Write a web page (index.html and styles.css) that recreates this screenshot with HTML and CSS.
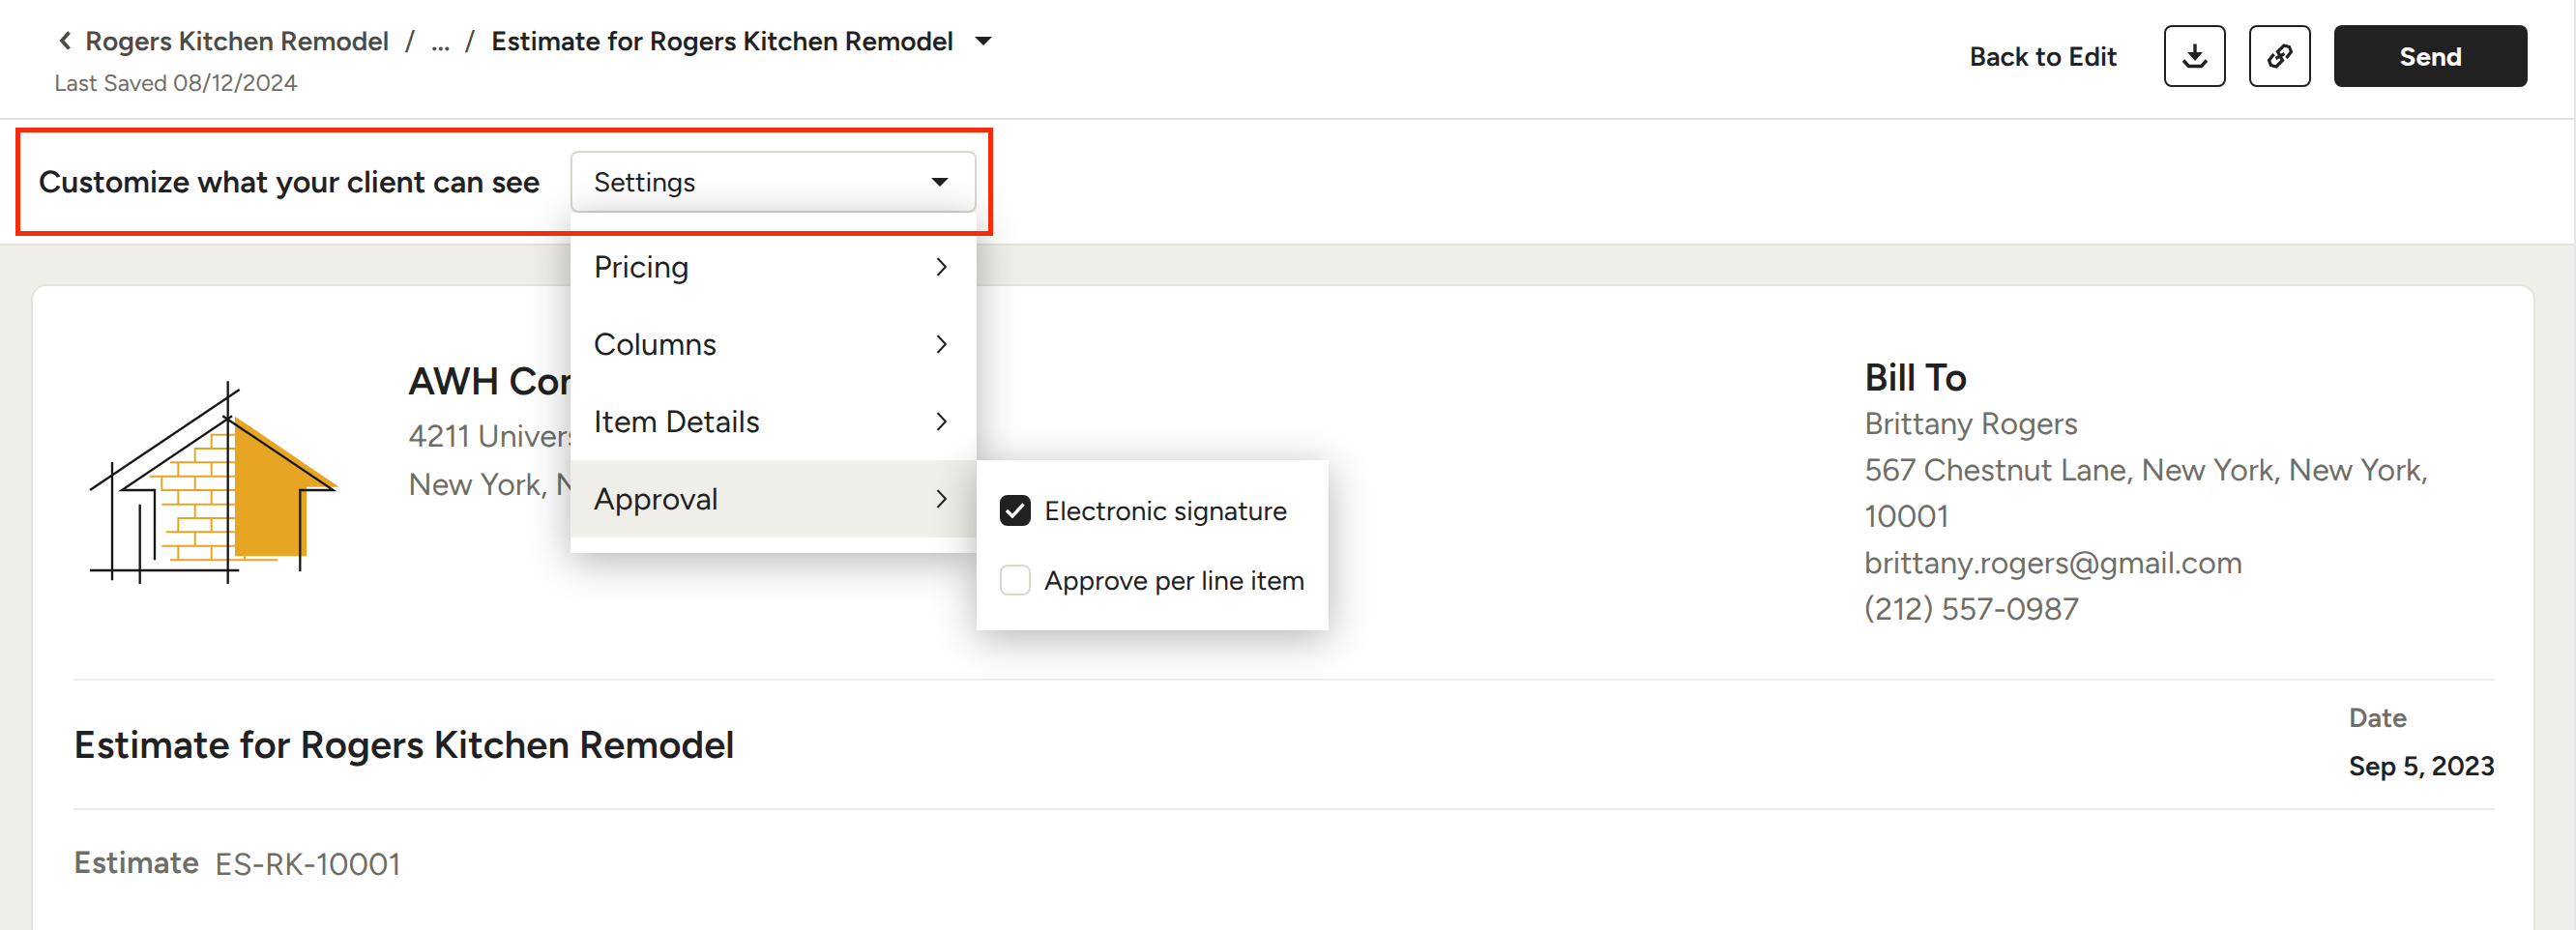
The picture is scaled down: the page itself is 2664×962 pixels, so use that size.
FILE: index.html
```html
<!DOCTYPE html>
<html lang="en">
<head>
    <meta charset="UTF-8">
    <meta name="viewport" content="width=device-width, initial-scale=1.0">
    <title>Estimate for Rogers Kitchen Remodel</title>
    <link rel="stylesheet" href="styles.css">
</head>
<body>
    <header class="topbar">
        <div class="topbar-left">
            <nav class="breadcrumb">
                <svg class="back-icon" width="12" height="20" viewBox="0 0 12 20"><path d="M10.500 1.500L3 10l7.500 8.500" fill="none" stroke="#4c4b45" stroke-width="3.800"/></svg>
                <a class="crumb crumb-project">Rogers Kitchen Remodel</a>
                <span class="slash">/</span>
                <span class="crumb dots">...</span>
                <span class="slash">/</span>
                <span class="crumb-current">Estimate for Rogers Kitchen Remodel</span>
                <svg class="caret" width="18" height="9" viewBox="0 0 18 9"><path d="M0 0h18l-9 9z" fill="#212121"/></svg>
            </nav>
            <p class="last-saved">Last Saved 08/12/2024</p>
        </div>
        <div class="topbar-actions">
            <a class="back-to-edit">Back to Edit</a>
            <button class="icon-btn">
                <svg width="28" height="28" viewBox="0 0 28 28"><path d="M12.300 1.500h3.400V10H22l-8 9-8-9h6.300z" fill="#212121"/><path d="M2 18.500l5.500 6h13l5.500-6" fill="none" stroke="#212121" stroke-width="3.400"/></svg>
            </button>
            <button class="icon-btn">
                <svg width="26" height="28" viewBox="0 0 26 28"><path d="M19.500 16L24.500 9.500L22.500 4.500L17 3L10.500 9.500L13 14L17.500 11.500M6.500 12L1.500 18.500L3.500 23.500L9 25L15.500 18.500L13 14L8.500 16.500" fill="none" stroke="#212121" stroke-width="3.200"/></svg>
            </button>
            <button class="send-btn">Send</button>
        </div>
    </header>

    <section class="customize-bar">
        <div class="highlight"></div>
        <h2 class="customize-label">Customize what your client can see</h2>
        <div class="settings">
            <div class="select">
                <span>Settings</span>
                <svg class="caret" width="18" height="9" viewBox="0 0 18 9"><path d="M0 0h18l-9 9z" fill="#212121"/></svg>
            </div>
            <ul class="menu">
                <li class="menu-item">Pricing<svg width="12" height="20" viewBox="0 0 12 20"><path d="M1.500 1l8.500 9-8.500 9" fill="none" stroke="#212121" stroke-width="2"/></svg></li>
                <li class="menu-item">Columns<svg width="12" height="20" viewBox="0 0 12 20"><path d="M1.500 1l8.500 9-8.500 9" fill="none" stroke="#212121" stroke-width="2"/></svg></li>
                <li class="menu-item">Item Details<svg width="12" height="20" viewBox="0 0 12 20"><path d="M1.500 1l8.500 9-8.500 9" fill="none" stroke="#212121" stroke-width="2"/></svg></li>
                <li class="menu-item active">Approval<svg width="12" height="20" viewBox="0 0 12 20"><path d="M1.500 1l8.500 9-8.500 9" fill="none" stroke="#212121" stroke-width="2"/></svg>
                    <div class="submenu">
                        <div class="option">
                            <span class="checkbox checked"><svg width="20" height="16" viewBox="0 0 20 16"><path d="M1 8l6 6L18.500 1.500" fill="none" stroke="#fff" stroke-width="3.400"/></svg></span>
                            <span>Electronic signature</span>
                        </div>
                        <div class="option">
                            <span class="checkbox"></span>
                            <span>Approve per line item</span>
                        </div>
                    </div>
                </li>
            </ul>
        </div>
    </section>

    <main class="estimate">
        <section class="parties">
            <svg class="logo" width="320" height="260" viewBox="0 0 960 780">
                <!-- wall and bricks -->
                <path d="M549 182L872 401H771V616H549z" fill="#e6a624"/>
                <path d="M549 239H476V282M549 282H425V325M348 325H549M373 325V368M476 325V368M284 368H549M322 368V411H549M425 368V411M373 411V455M476 411V455M322 455H549M425 455V498M549 498H373V541M476 498V541M335 541H549M425 541V584M322 584H549M373 584V628M476 584V628M348 628H682M579 616V628" fill="none" stroke="#e6a624" stroke-width="6"/>
                <!-- frame lines -->
                <path d="M99 411L563 99M527 73V702M168 324V691M254 455V702M99 660H562M300 628V411H198L540 181M511 181L854 411H751V663" fill="none" stroke="#171717" stroke-width="7"/>
            </svg>
            <div class="company">
                <h3>AWH Construction</h3>
                <p>4211 University</p>
                <p>New York, NY</p>
            </div>
            <div class="bill-to">
                <h3>Bill To</h3>
                <p>Brittany Rogers</p>
                <p>567 Chestnut Lane, New York, New York,<br>10001</p>
                <p class="email">brittany.rogers@gmail.com</p>
                <p>(212) 557-0987</p>
            </div>
        </section>
        <section class="title-row">
            <h1>Estimate for Rogers Kitchen Remodel</h1>
            <div class="date">
                <span class="date-label">Date</span>
                <span class="date-value">Sep 5, 2023</span>
            </div>
        </section>
        <section class="number-row">
            <span class="number-label">Estimate</span>
            <span class="number-value">ES-RK-10001</span>
        </section>
    </main>
</body>
</html>
```
FILE: styles.css
```css
* {
    box-sizing: border-box;
}
body {
    margin: 0;
    height: 962px;
    overflow: hidden;
    font-family: Figtree, Lato, "Open Sans", sans-serif;
    text-rendering: geometricPrecision;
    color: #212121;
    background-color: #efeee9;
    border-right: 2px solid #e6e6e6;
    white-space: nowrap;
}
h1, h2, h3, p, ul {
    margin: 0;
    padding: 0;
    font-weight: 600;
}
p {
    font-weight: 400;
}
svg {
    display: block;
    flex: none;
}

/* top bar */
.topbar {
    display: flex;
    justify-content: space-between;
    height: 124px;
    padding: 0 48px 0 56px;
    background-color: #fff;
    border-bottom: 2px solid #e3e3db;
}
.breadcrumb {
    display: flex;
    align-items: center;
    height: 44px;
    margin-top: 20px;
    font-size: 28px;
    font-weight: 600;
    letter-spacing: 0.05px;
}
.back-icon {
    margin: 0 15px 0 5px;
}
.crumb, .slash {
    color: #4c4b45;
}
.slash {
    width: 44px;
    text-align: center;
    font-weight: 400;
}
.crumb-project {
    width: 314px;
}
.dots {
    width: 18px;
}
.crumb-current {
    width: 479px;
}
.breadcrumb .caret {
    margin-left: 21px;
}
.last-saved {
    height: 40px;
    line-height: 44px;
    font-size: 24px;
    color: #6f6e66;
}
.topbar-actions {
    display: flex;
    align-items: center;
    height: 64px;
    margin-top: 26px;
}
.back-to-edit {
    margin-right: 48px;
    font-size: 28px;
    font-weight: 600;
}
.icon-btn {
    display: flex;
    align-items: center;
    justify-content: center;
    width: 64px;
    height: 64px;
    margin-right: 24px;
    padding: 0;
    background-color: #fff;
    border: 2px solid #212121;
    border-radius: 8px;
}
.send-btn {
    width: 200px;
    height: 64px;
    font-family: inherit;
    font-size: 28px;
    font-weight: 700;
    color: #fff;
    background-color: #212121;
    border: none;
    border-radius: 8px;
}

/* customize bar */
.customize-bar {
    position: relative;
    display: flex;
    align-items: center;
    height: 130px;
    padding-left: 40px;
    background-color: #fff;
    border-bottom: 2px solid #e3e3db;
}
.highlight {
    position: absolute;
    z-index: 3;
    left: 16px;
    top: 8px;
    width: 1011px;
    height: 112px;
    border: 5px solid #f62b0b;
}
.customize-label {
    width: 550px;
    font-size: 32px;
    letter-spacing: 0.04px;
}
.settings {
    position: relative;
    width: 420px;
}
.select {
    display: flex;
    align-items: center;
    justify-content: space-between;
    height: 64px;
    padding: 0 27px 0 22px;
    font-size: 28px;
    border: 2px solid #dad7ce;
    border-radius: 8px;
}
.menu {
    position: absolute;
    z-index: 2;
    top: 64px;
    left: 0;
    width: 420px;
    padding: 16px 0;
    list-style: none;
    background-color: #fff;
    box-shadow: 0 8px 40px rgba(0, 0, 0, 0.3);
}
.menu-item {
    position: relative;
    display: flex;
    align-items: center;
    justify-content: space-between;
    height: 80px;
    padding: 0 30px 0 24px;
    font-size: 32px;
    font-weight: 400;
    letter-spacing: 0.12px;
}
.menu-item.active {
    background-color: #efeee9;
}
.submenu {
    position: absolute;
    top: 0;
    left: 420px;
    width: 364px;
    height: 176px;
    padding: 16px 24px;
    font-size: 28px;
    letter-spacing: 0.04px;
    background-color: #fff;
    box-shadow: 0 8px 40px rgba(0, 0, 0, 0.3);
}
.option {
    display: flex;
    align-items: center;
    gap: 14px;
    height: 72px;
}
.checkbox {
    display: flex;
    align-items: center;
    justify-content: center;
    width: 32px;
    height: 32px;
    border: 2px solid #dad7ce;
    border-radius: 8px;
}
.checkbox.checked {
    background-color: #212121;
    border-color: #212121;
}

/* estimate card */
.estimate {
    width: 2590px;
    height: 668px;
    margin: 40px 0 0 32px;
    padding: 0 40px 0 42px;
    background-color: #fff;
    border: 2px solid #e5e3dc;
    border-bottom: none;
    border-radius: 16px 16px 0 0;
}
.parties {
    display: flex;
    height: 408px;
    border-bottom: 2px solid #eeede8;
}
.logo {
    margin: 74px 0 0 -16px;
}
.company {
    margin: 72px 0 0 42px;
    width: 1506px;
    font-size: 32px;
    color: #6f6e66;
}
.company h3, .bill-to h3 {
    font-size: 40px;
    color: #212121;
}
.company h3 {
    height: 58px;
    line-height: 52px;
}
.company p {
    line-height: 50px;
}
.bill-to {
    margin-top: 70px;
    font-size: 32px;
    color: #6f6e66;
}
.bill-to h3 {
    height: 48px;
    line-height: 48px;
}
.bill-to p {
    line-height: 48px;
}
.bill-to .email {
    letter-spacing: 0.13px;
}
.title-row {
    display: flex;
    align-items: center;
    justify-content: space-between;
    height: 134px;
    border-bottom: 2px solid #e9e9e7;
}
.title-row h1 {
    font-size: 40px;
    letter-spacing: 0.09px;
}
.date {
    display: flex;
    flex-direction: column;
    width: 151px;
    padding-bottom: 6px;
    font-size: 28px;
    font-weight: 600;
    line-height: 50px;
}
.date-label {
    color: #6f6e66;
}
.number-row {
    display: flex;
    gap: 16px;
    padding-top: 34px;
    font-size: 32px;
    line-height: 44px;
    color: #6f6e66;
}
.number-label {
    font-weight: 600;
    line-height: 41px;
    letter-spacing: 0.15px;
}
```
